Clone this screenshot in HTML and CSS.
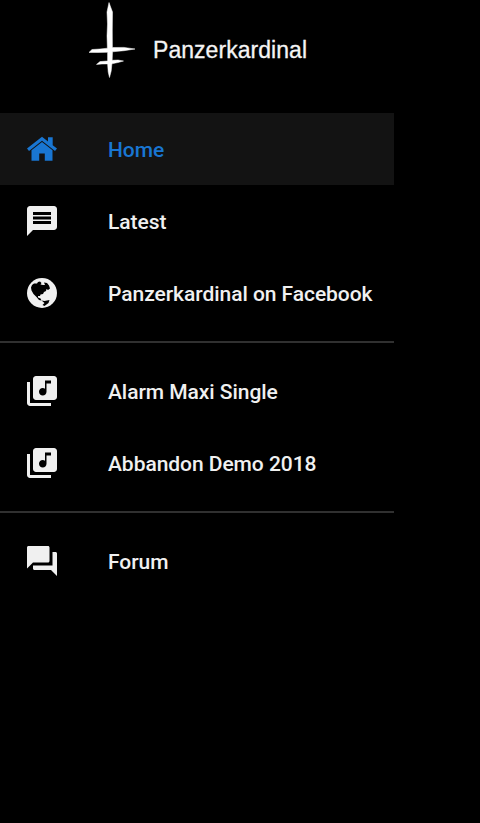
FILE: index.html
```html
<!DOCTYPE html>
<html lang="en">
<head>
<meta charset="utf-8">
<title>Panzerkardinal</title>
<link rel="stylesheet" href="styles.css">
</head>

<body>

<nav class="drawer">

<div class="header">
<svg class="logo" viewBox="0 0 64 84">
<path d="M29 2.500 L31 8 L32.500 12 L32.300 30 L32.400 47.500 L44 47.400 L55 49 L44 50.700 L32.500 51.800 L32.200 60.300 L38 60 L43.500 61 L38 62.500 L31.900 63.800 L31.200 71 L29.500 77.500 L28.200 72 L27.600 63.900 L22 64 L16.500 64.400 L20 61.600 L27.600 61 L27.600 52.300 L18 52.500 L9 52.400 L12 49.500 L20 49 L27.400 48.200 L27 36 L27.500 24 L27 12 Z"/>
</svg>
<span class="brand">Panzerkardinal</span>
</div>

<a class="item active">
<svg class="icon" viewBox="0 0 36 36">
<path d="M18 5.8 L3 17.6 L5 20 L18 9.8 L31 20 L33 17.6 L28.7 14.2 V6.3 H24 V10.5 Z"/>
<path d="M18 11 L7.5 19.2 V29.8 H15.2 V22.4 H20.8 V29.8 H28.5 V19.2 Z"/>
</svg>
<span>Home</span>
</a>

<a class="item">
<svg class="icon" viewBox="0 0 24 24">
<path d="M20 2H4c-1.1 0-1.99.9-1.99 2L2 22l4-4h14c1.1 0 2-.9 2-2V4c0-1.1-.9-2-2-2zm-2 12H6v-2h12v2zm0-3H6V9h12v2zm0-3H6V6h12v2z"/>
</svg>
<span>Latest</span>
</a>

<a class="item">
<svg class="icon" viewBox="0 0 36 36">
<circle cx="18" cy="18" r="15"/>
<path class="land" d="M8 10 L10 8.5 L13 8.5 L14 7 L16 6.5 L17.500 8 L16.500 9.500 L19 10 L21 10 L20 7.500 L23 8 L25 10.500 L26 13.500 L24 15 L22.500 14 L22 16 L20 17 L19 19 L16.500 19.500 L16 21 L14 21 L14 22.500 L16.500 23.500 L17.500 25.500 L15 25 L12.500 22 L9.500 19 L7.500 15.500 L7 12.500 Z"/>
<path class="land" d="M17.500 25.500 L20.500 26 L25.500 25 L24.500 28 L20.500 31 L18.500 30 L20.500 28 Z"/>
</svg>
<span>Panzerkardinal on Facebook</span>
</a>

<hr>

<a class="item">
<svg class="icon" viewBox="0 0 24 24">
<path d="M20 2H8c-1.1 0-2 .9-2 2v12c0 1.1.9 2 2 2h12c1.1 0 2-.9 2-2V4c0-1.1-.9-2-2-2zm-2 5h-3v5.5c0 1.38-1.12 2.5-2.5 2.5S10 13.88 10 12.5s1.12-2.5 2.5-2.5c.57 0 1.08.19 1.5.51V5h4v2zM4 6H2v14c0 1.1.9 2 2 2h14v-2H4V6z"/>
</svg>
<span>Alarm Maxi Single</span>
</a>

<a class="item">
<svg class="icon" viewBox="0 0 24 24">
<path d="M20 2H8c-1.1 0-2 .9-2 2v12c0 1.1.9 2 2 2h12c1.1 0 2-.9 2-2V4c0-1.1-.9-2-2-2zm-2 5h-3v5.5c0 1.38-1.12 2.5-2.5 2.5S10 13.88 10 12.5s1.12-2.5 2.5-2.5c.57 0 1.08.19 1.5.51V5h4v2zM4 6H2v14c0 1.1.9 2 2 2h14v-2H4V6z"/>
</svg>
<span>Abbandon Demo 2018</span>
</a>

<hr>

<a class="item">
<svg class="icon" viewBox="0 0 24 24">
<path d="M21 6h-2v9H6v2c0 .55.45 1 1 1h11l4 4V7c0-.55-.45-1-1-1zm-4 6V3c0-.55-.45-1-1-1H3c-.55 0-1 .45-1 1v14l4-4h10c.55 0 1-.45 1-1z"/>
</svg>
<span>Forum</span>
</a>

</nav>

</body>
</html>
```

FILE: styles.css
```css
body{
margin:0;
background-color:black;
font-family:Roboto, sans-serif;
}

.drawer{
width:394px;
}

.header{
display:flex;
align-items:flex-start;
height:113px;
padding-left:80px;
box-sizing:border-box;
}

.logo{
width:64px;
height:84px;
fill:white;
stroke:white;
stroke-width:0.5px;
}

.brand{
margin:37px 0 0 9px;
font-family:"Liberation Sans", Arial, sans-serif;
font-size:23px;
line-height:26px;
letter-spacing:0.05px;
-webkit-text-stroke:0.3px #f4f4f4;
color:#f4f4f4;
}

.item{
display:flex;
align-items:center;
height:72px;
padding-left:24px;
box-sizing:border-box;
font-size:21px;
font-weight:500;
letter-spacing:-0.05px;
color:#f0f0f0;
white-space:nowrap;
}

.item span{
padding-top:2px;
}

.active{
background-color:#131313;
color:#1976d2;
}

.icon{
width:36px;
height:36px;
margin-right:48px;
fill:currentColor;
}

.icon .land{
fill:black;
}

hr{
height:2px;
margin:12px 0;
border:0;
background-color:#303030;
}
```
